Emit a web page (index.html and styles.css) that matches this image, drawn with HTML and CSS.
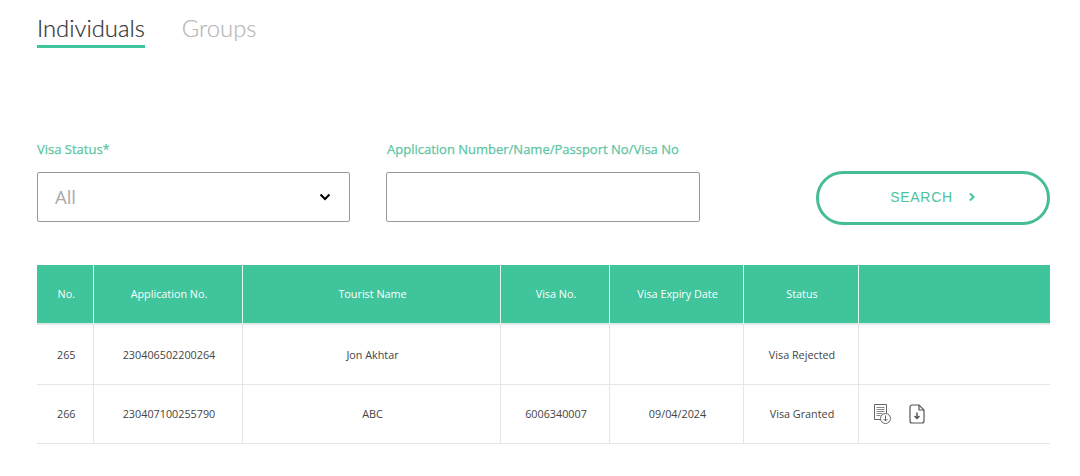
FILE: index.html
```html
<!DOCTYPE html>
<html lang="en">
<head>
<meta charset="utf-8">
<title>Applications</title>
<link rel="stylesheet" href="styles.css">
</head>
<body>
<main class="page">
  <nav class="tabs">
    <a class="tab tab-active">Individuals</a>
    <a class="tab">Groups</a>
  </nav>
  <form class="filters">
    <div class="field field-status">
      <label class="label">Visa Status*</label>
      <div class="control select">
        <span class="select-value">All</span>
        <svg class="chevron" width="12" height="8" viewBox="0 0 12 8"><path d="M1.500 1.500 6 6l4.500-4.500" fill="none" stroke="#000" stroke-width="2"/></svg>
      </div>
    </div>
    <div class="field field-query">
      <label class="label label-query">Application Number/Name/Passport No/Visa No</label>
      <div class="control"></div>
    </div>
    <button class="search" type="button">
      <span>SEARCH</span>
      <svg width="8" height="10" viewBox="0 0 8 10"><path d="M2 1.500 5.500 5 2 8.500" fill="none" stroke="#3fc49b" stroke-width="2"/></svg>
    </button>
  </form>
  <table class="grid">
    <thead>
      <tr>
        <th class="c1">No.</th><th class="c2">Application No.</th><th class="c3">Tourist Name</th><th class="c4">Visa No.</th><th class="c5">Visa Expiry Date</th><th class="c6">Status</th><th></th>
      </tr>
    </thead>
    <tbody>
      <tr>
        <td>265</td><td>230406502200264</td><td>Jon Akhtar</td><td></td><td></td><td>Visa Rejected</td><td></td>
      </tr>
      <tr>
        <td>266</td><td>230407100255790</td><td>ABC</td><td>6006340007</td><td>09/04/2024</td><td>Visa Granted</td>
        <td class="actions">
          <svg width="18" height="22" viewBox="0 0 18 22" fill="none" stroke="#666" stroke-width="1">
            <path d="M9 16.500H1.500V1.500h12V10"/>
            <path d="M3.500 4.500h8M3.500 6.500h8M3.500 8.500h8M3.500 10.500h6M3.500 12.500h4" stroke="#888"/>
            <circle cx="12.500" cy="15.500" r="5" fill="#fff"/>
            <path d="M12.500 12.500v5.500M10.500 16l2 2 2-2"/>
          </svg>
          <svg class="file" width="16" height="20" viewBox="0 0 16 20" fill="none" stroke="#555" stroke-width="1.200">
            <path d="M10 1H3a2 2 0 0 0-2 2v14a2 2 0 0 0 2 2h10a2 2 0 0 0 2-2V6z"/>
            <path d="M10 1v5h5"/>
            <path d="M8 8.500v6M5.500 12 8 14.500l2.500-2.500" stroke-width="1.500"/>
          </svg>
        </td>
      </tr>
    </tbody>
  </table>
</main>
</body>
</html>
```
FILE: styles.css
```css
* { box-sizing: border-box; }
html, body { margin: 0; background: #fff; }
body { font-family: "Open Sans", sans-serif; height: 476px; overflow: hidden; }
.page { padding: 0 30px 0 37px; }
.tabs { display: flex; gap: 37px; padding-top: 13px; height: 48px; }
.tab {
  font-family: "Lato", sans-serif;
  font-weight: 300;
  font-size: 23.800px;
  line-height: 30px;
  height: 35px;
  color: #b8b8b8;
  -webkit-text-stroke: 0.2px currentColor;
}
.tab-active { color: #333; border-bottom: 3px solid #3fc49b; }
.filters { display: flex; align-items: flex-start; margin-top: 92px; }
.field { display: flex; flex-direction: column; }
.field-status { width: 313px; margin-right: 36px; }
.field-query { width: 314px; margin-right: 116px; }
.label {
  font-size: 13px;
  font-weight: 400;
  line-height: 18px;
  color: #5cc6a5;
  margin-bottom: 14px;
  -webkit-text-stroke: 0.25px currentColor;
}
.label-query { padding-left: 1px; }
.control { height: 50px; border: 1px solid #999; border-radius: 2px; background: #fff; }
.select { display: flex; align-items: center; justify-content: space-between; padding: 0 18px 0 17px; }
.select-value { font-size: 18.500px; font-weight: 400; color: #aaa; line-height: 24px; }
.chevron { margin-top: -1px; }
.search {
  width: 234px;
  height: 54px;
  margin-top: 31px;
  display: flex;
  align-items: center;
  justify-content: center;
  gap: 15px;
  background: #fff;
  border: 3px solid #47bd96;
  border-radius: 27px;
  font-family: "Liberation Sans", sans-serif;
  font-size: 14px;
  letter-spacing: 0.7px;
  color: #4cc39d;
  padding: 0 0 2px;
}
.grid {
  width: 1013px;
  margin-top: 40px;
  border-collapse: collapse;
  table-layout: fixed;
  font-size: 10.800px;
  text-align: center;
}
.c1 { width: 56px; }
.c2 { width: 149px; }
.c3 { width: 258px; }
.c4 { width: 109px; }
.c5 { width: 134px; }
.c6 { width: 115px; }
th {
  height: 59px;
  background: #3fc49b;
  color: #fff;
  font-weight: 400;
  border-right: 1px solid #e4f6f0;
  border-bottom: 2px solid #dfe9e6;
  padding: 0 0 2px 3px;
}
th:last-child, td:last-child { border-right: 0; }
td {
  height: 60px;
  padding: 0 0 0 3px;
  color: #444;
  border-right: 1px solid #e6e6e6;
  border-bottom: 1px solid #e6e6e6;
}
tbody tr:last-child td { height: 59px; }
td.actions { text-align: left; padding-left: 14px; }
.actions svg { vertical-align: middle; }
.actions .file { margin-left: 16px; }
```
